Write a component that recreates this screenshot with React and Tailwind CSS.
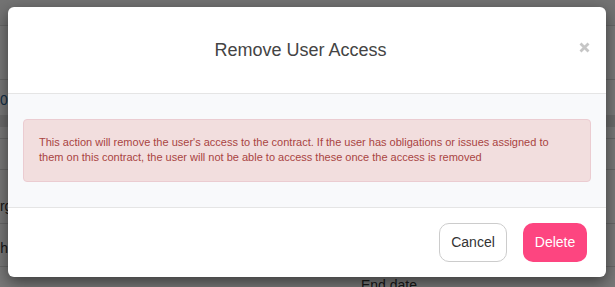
function BackgroundPage() {
  return (
    <div className="w-[615px] text-[14px] text-[#333]">
      <div className="h-[26px] border-b border-[#dcdcdc] bg-[#f4f4f4]" />
      <div className="h-[54px] border-b border-[#dcdcdc]" />
      <div className="flex h-[35px] items-end pb-[4px] text-[#2a6496]">
        <span>0</span>
      </div>
      <div className="h-[12px] bg-[#e4e4e4]" />
      <div className="h-[12px] border-b border-[#dcdcdc]" />
      <div className="h-[31px] border-b border-[#dcdcdc]" />
      <div className="flex h-[54px] items-end border-b border-[#dcdcdc] pb-[6px]">
        <span className="ml-[-11px]">Org</span>
      </div>
      <div className="flex h-[43px] items-end border-b border-[#dcdcdc] pb-[7px]">
        <span className="ml-[-9px]">Phone</span>
      </div>
      <div className="pl-[361px] pt-[8px]">End date</div>
    </div>
  );
}

export default function App() {
  return (
    <div className="relative h-[287px] w-[615px] overflow-hidden bg-white font-['Liberation_Sans',Arial,sans-serif]">
      <BackgroundPage />

      {/* backdrop */}
      <div className="absolute inset-0 bg-black/[0.53]" />

      {/* modal */}
      <div className="absolute left-[8px] top-[7px] w-[598px] overflow-hidden rounded-[6px] bg-white shadow-[0_5px_15px_rgba(0,0,0,0.5)]">
        <div className="flex h-[87px] items-center border-b border-[#e5e5e5] px-[15px]">
          <h4 className="flex-1 text-center text-[18px] leading-[20px] text-[#444]">Remove User Access</h4>
          <button className="flex w-[13px] items-center justify-center pb-[6px] text-[#c6c6c6]">
            <svg width="11" height="11" viewBox="0 0 11 11" fill="none" stroke="currentColor" strokeWidth="2.8">
              <path d="M1.5 1.5l8 8M9.5 1.5l-8 8" />
            </svg>
          </button>
        </div>

        <div className="border-b border-[#e5e5e5] bg-[#f8f9fb] px-[15px] pb-[25px] pt-[25px]">
          <div className="h-[63px] rounded-[4px] border border-[#ebccd1] bg-[#f2dede] px-[15px] pt-[15px] text-[11px] leading-[15px] text-[#a94442]">
            This action will remove the user's access to the contract. If the user has obligations or issues assigned to
            <br />
            them on this contract, the user will not be able to access these once the access is removed
          </div>
        </div>

        <div className="flex justify-end gap-[16px] py-[15px] pr-[19px]">
          <button className="h-[39px] w-[68px] rounded-[10px] border border-[#cccccc] bg-white text-[14px] text-[#333]">
            Cancel
          </button>
          <button className="h-[39px] w-[64px] rounded-[10px] bg-[#fd4580] text-[14px] text-white">
            Delete
          </button>
        </div>
      </div>
    </div>
  );
}
